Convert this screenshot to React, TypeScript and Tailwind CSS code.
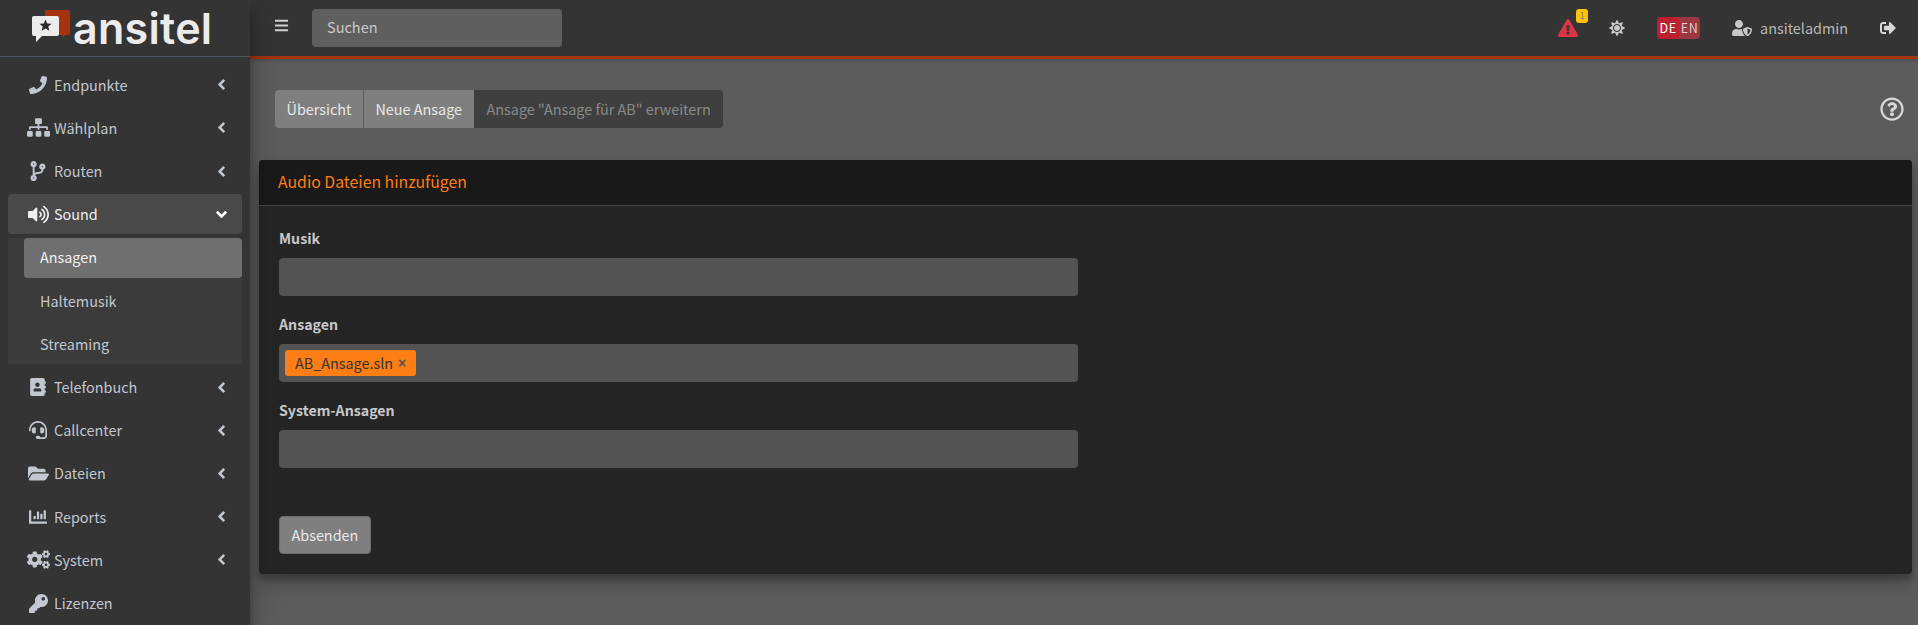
import { FaPhone, FaSitemap, FaCodeBranch, FaVolumeUp, FaAddressBook, FaHeadset, FaFolderOpen, FaChartBar, FaCogs, FaKey, FaAngleLeft, FaAngleDown, FaBars, FaExclamationTriangle, FaSun, FaUserShield, FaSignOutAlt, FaRegQuestionCircle } from "react-icons/fa";
import type { ReactNode } from "react";

function Item({ icon, label, arrow = true, active = false }: { icon: ReactNode; label: string; arrow?: boolean; active?: boolean }) {
  return (
    <div className={`mb-[3.2px] flex h-10 items-center rounded pl-4 pr-3 ${active ? "bg-[#494949] text-[#f0f0f0]" : "text-[#c2c7d0]"}`}>
      <span className="flex w-[28px] shrink-0 items-center justify-center">{icon}</span>
      <span className="ml-[2px] flex-1 leading-6">{label}</span>
      {arrow && (active ? <FaAngleDown className="text-[17px] text-white" /> : <FaAngleLeft className="text-[17px]" />)}
    </div>
  );
}

function Field({ label, children }: { label: string; children?: ReactNode }) {
  return (
    <div className="mb-4">
      <div className="mb-2 h-6 text-[14.2px] font-bold leading-6 text-[#c8c8c8]">{label}</div>
      <div className="flex h-[38px] w-[799px] items-center rounded bg-[#535353] px-[6px]">{children}</div>
    </div>
  );
}

export default function App() {
  return (
    <div className="flex h-[625px] w-full overflow-hidden bg-[#5c5c5c] text-[14.4px]" style={{ fontFamily: '"Noto Sans CJK SC", "Noto Sans", sans-serif' }}>
      <aside className="z-10 w-[250px] shrink-0 bg-[#343434] shadow-[0_14px_28px_rgba(0,0,0,0.25),0_10px_10px_rgba(0,0,0,0.22)]">
        <div className="flex h-[57px] items-start border-b border-[#4b545c] pl-[32px] pt-[10px]">
          <svg width="38" height="32" viewBox="0 0 38 32" className="shrink-0">
            <path d="M13 0h23a2 2 0 0 1 2 2v21a2 2 0 0 1-2 2h-3l-1.500 3-1-3H13z" fill="#a5330d" />
            <path d="M2 6h23a2 2 0 0 1 2 2v16a2 2 0 0 1-2 2H10l-6 6v-6H2a2 2 0 0 1-2-2V8a2 2 0 0 1 2-2z" fill="#ececec" />
            <path d="M13.500 9.500l1.700 3.900 4.300.4-3.200 2.800 1 4.200-3.800-2.200-3.800 2.200 1-4.200-3.200-2.800 4.300-.4z" fill="#2b2b2b" />
          </svg>
          <span className="ml-[3px] font-['Inter'] text-[43px] font-semibold leading-[36px] tracking-[0.3px] text-[#ececec]">ansitel</span>
        </div>
        <nav className="px-2 pt-[7.8px]">
          <Item icon={<FaPhone className="text-[18px]" />} label="Endpunkte" />
          <Item icon={<FaSitemap className="text-[23px]" />} label="Wählplan" />
          <Item icon={<FaCodeBranch className="text-[20px]" />} label="Routen" />
          <Item icon={<FaVolumeUp className="text-[21px]" />} label="Sound" active />
          <div className="mb-[3.2px] bg-[#3b3b3b]">
            <div className="ml-4 mb-[3.2px] flex h-10 items-center rounded bg-[#6f6f6f] px-4 pb-[1px] text-[#f0f0f0]">Ansagen</div>
            <div className="ml-4 mb-[3.2px] flex h-10 items-center px-4 text-[#c2c7d0]">Haltemusik</div>
            <div className="ml-4 flex h-10 items-center px-4 text-[#c2c7d0]">Streaming</div>
          </div>
          <Item icon={<FaAddressBook className="text-[18px]" />} label="Telefonbuch" />
          <Item icon={<FaHeadset className="text-[18px]" />} label="Callcenter" />
          <Item icon={<FaFolderOpen className="text-[21px]" />} label="Dateien" />
          <Item icon={<FaChartBar className="text-[18px]" />} label="Reports" />
          <Item icon={<FaCogs className="text-[23px]" />} label="System" />
          <Item icon={<FaKey className="text-[19px]" />} label="Lizenzen" arrow={false} />
        </nav>
      </aside>
      <main className="min-w-0 flex-1">
        <header className="flex h-[59px] items-center border-b-[3px] border-[#a5330d] bg-[#343434] pr-[22px] shadow-[0_1px_4px_rgba(0,0,0,0.2)]">
          <FaBars className="ml-[24px] mb-[6px] text-[15px] text-[#d0d0d0]" />
          <div className="ml-[23px] flex h-[38px] w-[250px] items-center rounded bg-[#5f5f5f] px-[15px] pb-[2px] text-[14.5px] text-[#c8c8c8]">Suchen</div>
          <div className="flex-1" />
          <div className="relative mr-[31px]">
            <FaExclamationTriangle className="text-[20px] text-[#dc3545]" />
            <span className="absolute -right-[10px] -top-[9px] flex h-[14px] w-[12px] items-center justify-center rounded-[3px] bg-[#ffc107] text-[9px] text-[#777]">1</span>
          </div>
          <FaSun className="mr-[32px] text-[16px] text-[#c8c8c8]" />
          <div className="flex h-[22px] overflow-hidden rounded text-[12.5px] leading-[22px] tracking-[0.6px]">
            <span className="w-[22px] bg-[#bd2130] text-center text-white">DE</span>
            <span className="w-[21px] bg-[#9c3643] text-center text-[#dcc]">EN</span>
          </div>
          <FaUserShield className="ml-[32px] text-[20px] text-[#c8c8c8]" />
          <span className="ml-[8px] text-[#b8b8b8]">ansiteladmin</span>
          <FaSignOutAlt className="ml-[32px] text-[16px] text-[#d8d8d8]" />
        </header>
        <section className="pl-[9px] pr-[6px]">
          <div className="flex items-center justify-between pl-[16px] pr-[8px] pt-[31px]">
            <div className="flex h-[38px] overflow-hidden rounded text-[#e8e8e8]">
              <span className="flex items-center border-r border-[#5c5c5c] bg-[#7f7f7f] px-[11.5px]">Übersicht</span>
              <span className="flex items-center bg-[#7f7f7f] px-[11.5px]">Neue Ansage</span>
              <span className="flex items-center bg-[#3f3f3f] pl-[13px] pr-[12px] text-[#8a8a8a]">Ansage "Ansage für AB" erweitern</span>
            </div>
            <FaRegQuestionCircle className="text-[24px] text-[#d8d8d8]" />
          </div>
          <div className="mt-[32px] rounded bg-[#252525] shadow-[0_10px_20px_rgba(0,0,0,0.19),0_6px_6px_rgba(0,0,0,0.23)]">
            <div className="flex h-[46px] items-center rounded-t border-b border-[#444] bg-[#191919] px-[19px] pb-[2px] text-[15.8px] text-[#fd7e14]">Audio Dateien hinzufügen</div>
            <div className="p-5">
              <Field label="Musik" />
              <Field label="Ansagen">
                <span className="flex h-[26px] items-center rounded-[3px] bg-[#fd7e14] px-[10px] text-[#333]">AB_Ansage.sln<span className="ml-[5px] font-['Liberation_Sans'] text-[14px] font-bold text-[#555]">×</span></span>
              </Field>
              <Field label="System-Ansagen" />
              <button className="mt-[32px] h-[38px] rounded border border-[#6c6c6c] bg-[#7f7f7f] px-[11.5px] text-[#e8e8e8]">Absenden</button>
            </div>
          </div>
        </section>
      </main>
    </div>
  );
}
